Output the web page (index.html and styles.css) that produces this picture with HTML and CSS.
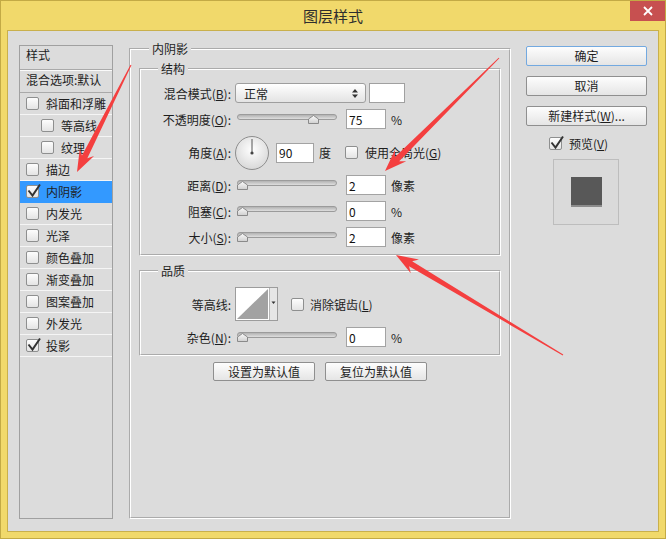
FILE: index.html
```html
<!DOCTYPE html>
<html lang="zh-CN">
<head>
    <meta charset="UTF-8">
    <title>图层样式</title>
    <link rel="stylesheet" href="styles.css">
</head>
<body>
    <div class="window">
        <div class="titlebar">
            <span class="title">图层样式</span>
        </div>
        <div class="close">
            <svg width="10" height="10" viewBox="0 0 10 10"><path d="M1 1 L9 9 M9 1 L1 9" stroke="#fff" stroke-width="1.8"/></svg>
        </div>

        <div class="dialog">
            <!-- left: list of effects -->
            <div class="styles-list">
                <div class="list-head">样式</div>
                <div class="list-item blend">混合选项:默认</div>
                <div class="list-item"><span class="cb"></span>斜面和浮雕</div>
                <div class="list-item sub"><span class="cb"></span>等高线</div>
                <div class="list-item sub"><span class="cb"></span>纹理</div>
                <div class="list-item"><span class="cb"></span>描边</div>
                <div class="list-item selected"><span class="cb"><svg width="16" height="16" viewBox="0 0 16 16"><path d="M2.5 7.5 L6.5 12.5 L14 1.5" fill="none" stroke="#333" stroke-width="2"/></svg></span>内阴影</div>
                <div class="list-item"><span class="cb"></span>内发光</div>
                <div class="list-item"><span class="cb"></span>光泽</div>
                <div class="list-item"><span class="cb"></span>颜色叠加</div>
                <div class="list-item"><span class="cb"></span>渐变叠加</div>
                <div class="list-item"><span class="cb"></span>图案叠加</div>
                <div class="list-item"><span class="cb"></span>外发光</div>
                <div class="list-item"><span class="cb"><svg width="16" height="16" viewBox="0 0 16 16"><path d="M2.5 7.5 L6.5 12.5 L14 1.5" fill="none" stroke="#333" stroke-width="2"/></svg></span>投影</div>
            </div>

            <!-- middle: inner shadow settings -->
            <fieldset class="panel">
                <legend>内阴影</legend>

                <fieldset class="group structure">
                    <legend>结构</legend>
                    <div class="row">
                        <span class="lbl">混合模式(<u>B</u>):</span>
                        <div class="select">正常
                            <svg width="6" height="9" viewBox="0 0 6 9"><path d="M0 3.5 L3 0 L6 3.5 Z M0 5.5 L3 9 L6 5.5 Z" fill="#333"/></svg>
                        </div>
                        <div class="swatch"></div>
                    </div>
                    <div class="row">
                        <span class="lbl">不透明度(<u>O</u>):</span>
                        <div class="slider"><div class="track"></div><svg class="thumb" style="left: 71px" width="11" height="9" viewBox="0 0 11 9"><path d="M0.5 4 L5.5 0.5 L10.5 4 L10.5 8.5 L0.5 8.5 Z" fill="url(#tg)" stroke="#8a8a8a"/></svg></div>
                        <input class="num" type="text" value="75">
                        <span class="unit">%</span>
                    </div>
                    <div class="row angle">
                        <span class="lbl">角度(<u>A</u>):</span>
                        <svg class="dial" width="34" height="34" viewBox="0 0 34 34">
                            <defs>
                                <radialGradient id="dg" cx="50%" cy="40%" r="60%">
                                    <stop offset="0" stop-color="#ffffff"/>
                                    <stop offset="1" stop-color="#d8d8d8"/>
                                </radialGradient>
                                <linearGradient id="tg" x1="0" y1="0" x2="0" y2="1">
                                    <stop offset="0" stop-color="#fbfbfb"/>
                                    <stop offset="1" stop-color="#cfcfcf"/>
                                </linearGradient>
                            </defs>
                            <circle cx="17" cy="17" r="16.5" fill="url(#dg)" stroke="#8d8d8d"/>
                            <line x1="17" y1="17" x2="17" y2="3" stroke="#555" stroke-width="1"/>
                            <circle cx="17" cy="17" r="1.6" fill="#444"/>
                        </svg>
                        <input class="num angle-num" type="text" value="90">
                        <span class="unit">度</span>
                        <span class="cb global"></span>
                        <span>使用全局光(<u>G</u>)</span>
                    </div>
                    <div class="row">
                        <span class="lbl">距离(<u>D</u>):</span>
                        <div class="slider"><div class="track"></div><svg class="thumb" width="11" height="9" viewBox="0 0 11 9"><path d="M0.5 4 L5.5 0.5 L10.5 4 L10.5 8.5 L0.5 8.5 Z" fill="url(#tg)" stroke="#8a8a8a"/></svg></div>
                        <input class="num" type="text" value="2">
                        <span class="unit">像素</span>
                    </div>
                    <div class="row">
                        <span class="lbl">阻塞(<u>C</u>):</span>
                        <div class="slider"><div class="track"></div><svg class="thumb" width="11" height="9" viewBox="0 0 11 9"><path d="M0.5 4 L5.5 0.5 L10.5 4 L10.5 8.5 L0.5 8.5 Z" fill="url(#tg)" stroke="#8a8a8a"/></svg></div>
                        <input class="num" type="text" value="0">
                        <span class="unit">%</span>
                    </div>
                    <div class="row">
                        <span class="lbl">大小(<u>S</u>):</span>
                        <div class="slider"><div class="track"></div><svg class="thumb" width="11" height="9" viewBox="0 0 11 9"><path d="M0.5 4 L5.5 0.5 L10.5 4 L10.5 8.5 L0.5 8.5 Z" fill="url(#tg)" stroke="#8a8a8a"/></svg></div>
                        <input class="num" type="text" value="2">
                        <span class="unit">像素</span>
                    </div>
                </fieldset>

                <fieldset class="group quality">
                    <legend>品质</legend>
                    <div class="row contour-row">
                        <span class="lbl">等高线:</span>
                        <svg class="contour" width="43" height="34" viewBox="0 0 43 34">
                            <rect x="0.5" y="0.5" width="42" height="33" fill="#e6e6e6" stroke="#9c9c9c"/>
                            <rect x="1" y="1" width="33" height="32" fill="#fff"/>
                            <path d="M2 32 L33 2 L33 32 Z" fill="#a2a2a2"/>
                            <line x1="34.5" y1="1" x2="34.5" y2="33" stroke="#b5b5b5"/>
                            <path d="M36.5 14.5 L40.5 14.5 L38.5 17 Z" fill="#333"/>
                        </svg>
                        <span class="cb aa"></span>
                        <span>消除锯齿(<u>L</u>)</span>
                    </div>
                    <div class="row">
                        <span class="lbl">杂色(<u>N</u>):</span>
                        <div class="slider"><div class="track"></div><svg class="thumb" width="11" height="9" viewBox="0 0 11 9"><path d="M0.5 4 L5.5 0.5 L10.5 4 L10.5 8.5 L0.5 8.5 Z" fill="url(#tg)" stroke="#8a8a8a"/></svg></div>
                        <input class="num" type="text" value="0">
                        <span class="unit">%</span>
                    </div>
                </fieldset>

                <div class="btn-row">
                    <button class="btn small">设置为默认值</button>
                    <button class="btn small">复位为默认值</button>
                </div>
            </fieldset>

            <!-- right: dialog buttons and preview -->
            <div class="side">
                <button class="btn default">确定</button>
                <button class="btn">取消</button>
                <button class="btn">新建样式(<u>W</u>)...</button>
                <div class="preview-check">
                    <span class="cb"><svg width="16" height="16" viewBox="0 0 16 16"><path d="M2.5 7.5 L6.5 12.5 L14 1.5" fill="none" stroke="#333" stroke-width="2"/></svg></span>
                    <span>预览(<u>V</u>)</span>
                </div>
                <div class="preview">
                    <div class="preview-swatch"></div>
                </div>
            </div>
        </div>

        <!-- red annotation arrows -->
        <svg class="arrows" width="666" height="539" viewBox="0 0 666 539">
            <polygon points="130.55,64.77 81.98,155.47 79.77,148.76 77,172 94.05,155.96 87.34,158.17 131.45,65.23" fill="#f43f3f"/>
            <polygon points="498.65,57.64 394.97,156.9 395,149.83 385,171 406.26,161.19 399.19,161.16 499.35,58.36" fill="#f43f3f"/>
            <polygon points="563.26,354.57 412.13,261.16 418.99,259.44 396,255 410.77,273.16 409.05,266.3 562.74,355.43" fill="#f43f3f"/>
        </svg>
    </div>
</body>
</html>
```

FILE: styles.css
```css
body {
    margin: 0;
    font-family: "Noto Sans CJK SC", "Liberation Sans", sans-serif;
    font-size: 12px;
    color: #1e1e1e;
}
u {
    text-decoration-thickness: 1px;
    text-underline-offset: 1px;
}
.window {
    position: relative;
    width: 666px;
    height: 539px;
    box-sizing: border-box;
    background-color: #f1d96b;
    border: 1px solid #c3aa45;
    padding: 0 6px 6px;
    display: flex;
    flex-direction: column;
}
.titlebar {
    height: 29px;
    display: flex;
    align-items: center;
    justify-content: center;
}
.title {
    font-size: 15px;
    color: #2e2e2e;
}
.close {
    position: absolute;
    top: 0;
    right: 0;
    width: 35px;
    height: 20px;
    background-color: #c75050;
    display: flex;
    align-items: center;
    justify-content: center;
}
.dialog {
    flex: 1;
    display: flex;
    border: 1px solid #c9b04c;
    background-color: #dcdcdc;
    padding: 10px 11px 12px;
}

/* effect list */
.styles-list {
    width: 94px;
    margin-top: 4px;
    box-sizing: border-box;
    border: 1px solid #a0a0a0;
    flex: none;
}
.list-head {
    height: 24px;
    box-sizing: border-box;
    padding: 1px 0 0 6px;
    line-height: 16px;
    border-bottom: 1px solid #a9a9a9;
}
.list-item {
    height: 22px;
    box-sizing: border-box;
    display: flex;
    align-items: center;
    padding-left: 6px;
    border-bottom: 1px solid #f5f5f5;
    white-space: nowrap;
}
.list-item.blend {
    height: 23px;
    align-items: flex-start;
    line-height: 16px;
    padding-top: 1px;
    border-top: 1px solid #fafafa;
    border-bottom-color: #a9a9a9;
}
.list-item.sub {
    padding-left: 21px;
}
.list-item.selected {
    background-color: #3399ff;
    border-bottom-color: #3399ff;
}
.cb {
    position: relative;
    flex: none;
    width: 13px;
    height: 13px;
    box-sizing: border-box;
    border: 1px solid #8e8f8f;
    border-radius: 2px;
    background: linear-gradient(#fdfdfd, #e4e4e4);
    margin-right: 7px;
}
.cb svg {
    position: absolute;
    left: -1px;
    top: -3px;
    overflow: visible;
}

/* settings panel */
fieldset {
    margin: 0;
    min-width: 0;
    border: 2px groove #ffffff;
}
legend {
    padding: 0 3px;
    line-height: 16px;
}
.panel {
    width: 382px;
    box-sizing: border-box;
    flex: none;
    margin-left: 16px;
    padding: 4px 8px 0;
}
.panel > legend {
    margin-left: 10px;
}
.group {
    padding: 6px 0 7px;
}
.group > legend {
    margin-left: 17px;
}
.quality {
    margin-top: 7px;
    padding-top: 8px;
}
.row {
    display: flex;
    align-items: center;
    height: 20px;
    white-space: nowrap;
}
.row + .row {
    margin-top: 6px;
}
.row.angle {
    height: 33px;
    margin-top: 7px;
}
.row.contour-row {
    height: 34px;
}
.lbl {
    width: 90px;
    margin-right: 4px;
    text-align: right;
    flex: none;
}
.select {
    width: 131px;
    height: 20px;
    box-sizing: border-box;
    border: 1px solid #9e9e9e;
    border-radius: 3px;
    background: linear-gradient(#ffffff, #e3e3e3);
    display: flex;
    align-items: center;
    justify-content: space-between;
    padding: 0 7px 0 8px;
}
.swatch {
    width: 36px;
    height: 20px;
    box-sizing: border-box;
    margin-left: 3px;
    border: 1px solid #a0a0a0;
    background-color: #fff;
}
.slider {
    position: relative;
    width: 100px;
    height: 11px;
    margin-left: 2px;
    flex: none;
}
.track {
    height: 6px;
    box-sizing: border-box;
    border: 1px solid #9b9b9b;
    border-radius: 3px;
    background: linear-gradient(#b2b2b2, #dedede);
}
.thumb {
    position: absolute;
    top: 1px;
    left: 0;
}
.num {
    width: 40px;
    height: 20px;
    box-sizing: border-box;
    margin: 0 0 0 9px;
    padding: 0 0 0 2px;
    border: 1px solid #a3a3a3;
    background-color: #fff;
    font: inherit;
    color: #111;
    outline: none;
}
.angle-num {
    width: 38px;
    margin-left: 7px;
}
.unit {
    margin-left: 5px;
}
.dial {
    flex: none;
}
.cb.global {
    margin-left: 14px;
}
.contour {
    flex: none;
}
.cb.aa {
    margin-left: 13px;
    margin-right: 6px;
}
.btn-row {
    display: flex;
    justify-content: center;
    gap: 10px;
    margin-top: 6px;
}

/* buttons */
.btn {
    display: block;
    width: 121px;
    height: 20px;
    padding: 0;
    border: 1px solid #8f8f8f;
    border-radius: 2px;
    background: linear-gradient(#fdfdfd, #e5e5e5);
    font: inherit;
    color: #1e1e1e;
    line-height: 18px;
    text-align: center;
}
.btn.small {
    width: 102px;
    height: 19px;
    line-height: 17px;
}
.btn.default {
    border-color: #73a9e0;
}
.side {
    width: 121px;
    flex: none;
    margin-left: 15px;
    padding-top: 5px;
}
.side .btn {
    margin-bottom: 10px;
}
.preview-check {
    display: flex;
    align-items: center;
    height: 14px;
    padding-left: 23px;
}
.preview {
    width: 66px;
    height: 66px;
    box-sizing: border-box;
    margin: 9px 0 0 27px;
    border: 1px solid #bdbdbd;
    background-color: #dadada;
    display: flex;
    align-items: center;
    justify-content: center;
}
.preview-swatch {
    width: 31px;
    height: 30px;
    background-color: #585858;
    box-shadow: inset 0 -2px 0 #8c8c8c;
}

/* annotations */
.arrows {
    position: absolute;
    left: -1px;
    top: -1px;
    pointer-events: none;
}
```
